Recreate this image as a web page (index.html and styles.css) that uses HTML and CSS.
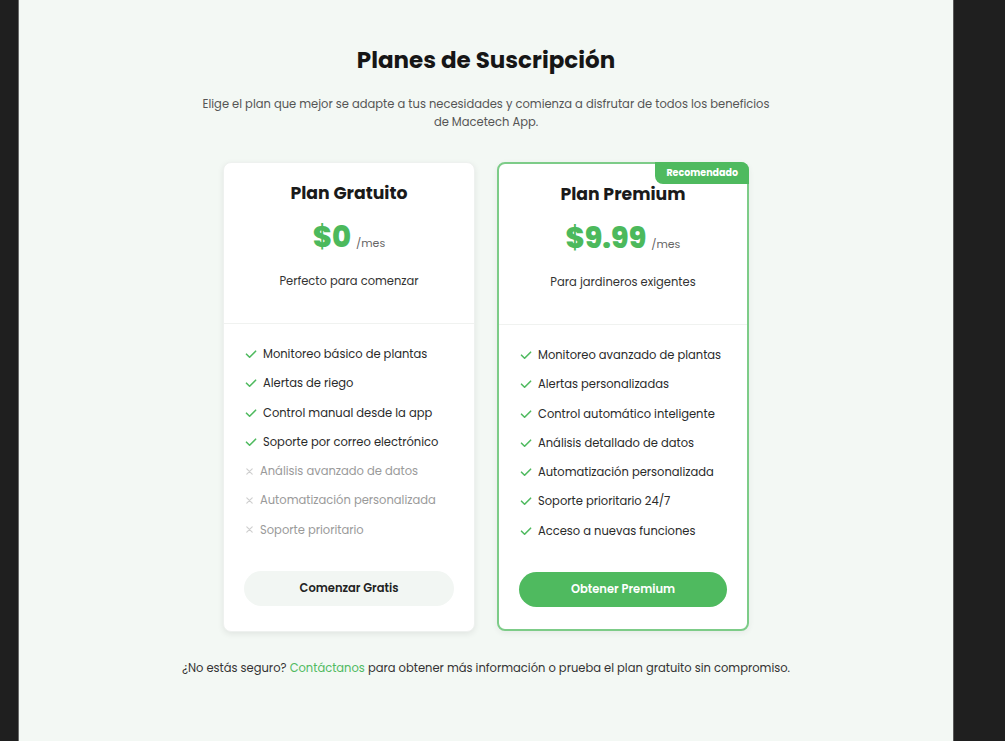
FILE: index.html
```html
<!DOCTYPE html>
<html lang="es">
<head>
<meta charset="utf-8">
<title>Planes de Suscripción</title>
<link rel="stylesheet" href="styles.css">
</head>
<body>
<div class="frame">
  <main class="panel">
    <header class="intro">
      <h1 class="intro-title">Planes de Suscripción</h1>
      <p class="intro-text">Elige el plan que mejor se adapte a tus necesidades y comienza a disfrutar de todos los beneficios de Macetech App.</p>
    </header>

    <section class="plans">
      <article class="card">
        <div class="card-head">
          <h2 class="card-title">Plan Gratuito</h2>
          <div class="price"><span class="price-amount">$0</span><span class="price-unit">/mes</span></div>
          <p class="card-sub">Perfecto para comenzar</p>
        </div>
        <div class="card-body">
          <ul class="features">
            <li class="feature"><svg class="ico-check" viewBox="0 0 12 12"><path d="M1.5 6.2 L4.6 9.2 L10.6 3.2"/></svg>Monitoreo básico de plantas</li>
            <li class="feature"><svg class="ico-check" viewBox="0 0 12 12"><path d="M1.5 6.2 L4.6 9.2 L10.6 3.2"/></svg>Alertas de riego</li>
            <li class="feature"><svg class="ico-check" viewBox="0 0 12 12"><path d="M1.5 6.2 L4.6 9.2 L10.6 3.2"/></svg>Control manual desde la app</li>
            <li class="feature"><svg class="ico-check" viewBox="0 0 12 12"><path d="M1.5 6.2 L4.6 9.2 L10.6 3.2"/></svg>Soporte por correo electrónico</li>
            <li class="feature off"><svg class="ico-x" viewBox="0 0 10 10"><path d="M2 2 L8 8 M8 2 L2 8"/></svg>Análisis avanzado de datos</li>
            <li class="feature off"><svg class="ico-x" viewBox="0 0 10 10"><path d="M2 2 L8 8 M8 2 L2 8"/></svg>Automatización personalizada</li>
            <li class="feature off"><svg class="ico-x" viewBox="0 0 10 10"><path d="M2 2 L8 8 M8 2 L2 8"/></svg>Soporte prioritario</li>
          </ul>
          <button class="btn btn-light" type="button">Comenzar Gratis</button>
        </div>
      </article>

      <article class="card card-premium">
        <span class="badge">Recomendado</span>
        <div class="card-head">
          <h2 class="card-title">Plan Premium</h2>
          <div class="price"><span class="price-amount">$9.99</span><span class="price-unit">/mes</span></div>
          <p class="card-sub">Para jardineros exigentes</p>
        </div>
        <div class="card-body">
          <ul class="features">
            <li class="feature"><svg class="ico-check" viewBox="0 0 12 12"><path d="M1.5 6.2 L4.6 9.2 L10.6 3.2"/></svg>Monitoreo avanzado de plantas</li>
            <li class="feature"><svg class="ico-check" viewBox="0 0 12 12"><path d="M1.5 6.2 L4.6 9.2 L10.6 3.2"/></svg>Alertas personalizadas</li>
            <li class="feature"><svg class="ico-check" viewBox="0 0 12 12"><path d="M1.5 6.2 L4.6 9.2 L10.6 3.2"/></svg>Control automático inteligente</li>
            <li class="feature"><svg class="ico-check" viewBox="0 0 12 12"><path d="M1.5 6.2 L4.6 9.2 L10.6 3.2"/></svg>Análisis detallado de datos</li>
            <li class="feature"><svg class="ico-check" viewBox="0 0 12 12"><path d="M1.5 6.2 L4.6 9.2 L10.6 3.2"/></svg>Automatización personalizada</li>
            <li class="feature"><svg class="ico-check" viewBox="0 0 12 12"><path d="M1.5 6.2 L4.6 9.2 L10.6 3.2"/></svg>Soporte prioritario 24/7</li>
            <li class="feature"><svg class="ico-check" viewBox="0 0 12 12"><path d="M1.5 6.2 L4.6 9.2 L10.6 3.2"/></svg>Acceso a nuevas funciones</li>
          </ul>
          <button class="btn btn-green" type="button">Obtener Premium</button>
        </div>
      </article>
    </section>

    <p class="footnote">¿No estás seguro? <a class="link" href="#">Contáctanos</a> para obtener más información o prueba el plan gratuito sin compromiso.</p>
  </main>
</div>
</body>
</html>
```

FILE: styles.css
```css
* { box-sizing: border-box; }

html, body {
  margin: 0;
  height: 100%;
}

body {
  background: #1f1f1f;
  font-family: "Poppins", "Inter", "Noto Sans", sans-serif;
  color: #1c1c1c;
}

.frame {
  display: flex;
  height: 741px;
  padding-left: 18px;
}

.panel {
  width: 936px;
  height: 100%;
  background: #f3f8f4;
  border-left: 1px solid #6a6a6a;
  border-right: 1px solid #5a5a5a;
  display: flex;
  flex-direction: column;
  align-items: center;
  padding-top: 44px;
}

.intro {
  text-align: center;
}

.intro-title {
  margin: 0;
  font-size: 23px;
  line-height: 33px;
  font-weight: 700;
  color: #161616;
}

.intro-text {
  margin: 18px auto 0;
  width: 575px;
  font-size: 11.5px;
  line-height: 18px;
  color: #555;
}

.plans {
  margin-top: 31px;
  display: flex;
  gap: 22px;
  align-items: flex-start;
}

.card {
  position: relative;
  width: 252px;
  height: 470px;
  background: #fff;
  border: 1px solid #eef1ef;
  border-radius: 8px;
  box-shadow: 0 2px 6px rgba(0, 0, 0, 0.08);
  display: flex;
  flex-direction: column;
}

.card-premium {
  height: 469px;
  border: 2px solid #7dcc88;
  box-shadow: 0 2px 6px rgba(0, 0, 0, 0.06);
}

.badge {
  position: absolute;
  top: -2px;
  right: -2px;
  background: #4fba5f;
  color: #fff;
  font-size: 9.5px;
  font-weight: 700;
  line-height: 22px;
  padding: 0 11px;
  border-radius: 0 8px 0 8px;
}

.card-head {
  text-align: center;
  padding: 17px 20px 0;
  height: 161px;
  border-bottom: 1px solid #f0f2f0;
}

.card-title {
  margin: 0;
  font-size: 17.3px;
  line-height: 26px;
  font-weight: 700;
  color: #1a1a1a;
}

.price {
  margin-top: 13px;
  display: flex;
  justify-content: center;
  align-items: baseline;
  gap: 5px;
}

.price-amount {
  font-size: 29px;
  line-height: 36px;
  font-weight: 800;
  color: #4cb95c;
}

.price-unit {
  font-size: 11px;
  color: #666;
}

.card-sub {
  margin: 17px 0 0;
  font-size: 11.5px;
  line-height: 18px;
  color: #333;
}

.card-body {
  flex: 1;
  display: flex;
  flex-direction: column;
  padding: 21px 20px 25px;
}

.card-premium .card-body {
  padding-bottom: 22px;
}

.features {
  list-style: none;
  margin: 0;
  padding: 0 0 0 1px;
  display: flex;
  flex-direction: column;
  gap: 11.3px;
}

.feature {
  display: flex;
  align-items: center;
  gap: 6px;
  font-size: 11.5px;
  line-height: 18px;
  color: #2a2a2a;
}

.feature.off {
  color: #9a9a9a;
  gap: 6px;
}

.ico-check {
  width: 12px;
  height: 12px;
  flex: none;
  fill: none;
  stroke: #4fba5f;
  stroke-width: 1.6;
  stroke-linecap: round;
  stroke-linejoin: round;
}

.ico-x {
  width: 9px;
  height: 9px;
  flex: none;
  fill: none;
  stroke: #cfcfcf;
  stroke-width: 1.3;
  stroke-linecap: round;
}

.btn {
  margin-top: auto;
  width: 100%;
  height: 35px;
  border: none;
  border-radius: 18px;
  font-family: inherit;
  font-size: 11.5px;
  font-weight: 600;
  cursor: pointer;
}

.btn-light {
  background: #f2f6f3;
  color: #222;
}

.btn-green {
  background: #4fba5f;
  color: #fff;
}

.footnote {
  margin: 27px 0 0;
  font-size: 11.5px;
  line-height: 18px;
  color: #333;
}

.link {
  color: #4fba5f;
  text-decoration: none;
}
```
